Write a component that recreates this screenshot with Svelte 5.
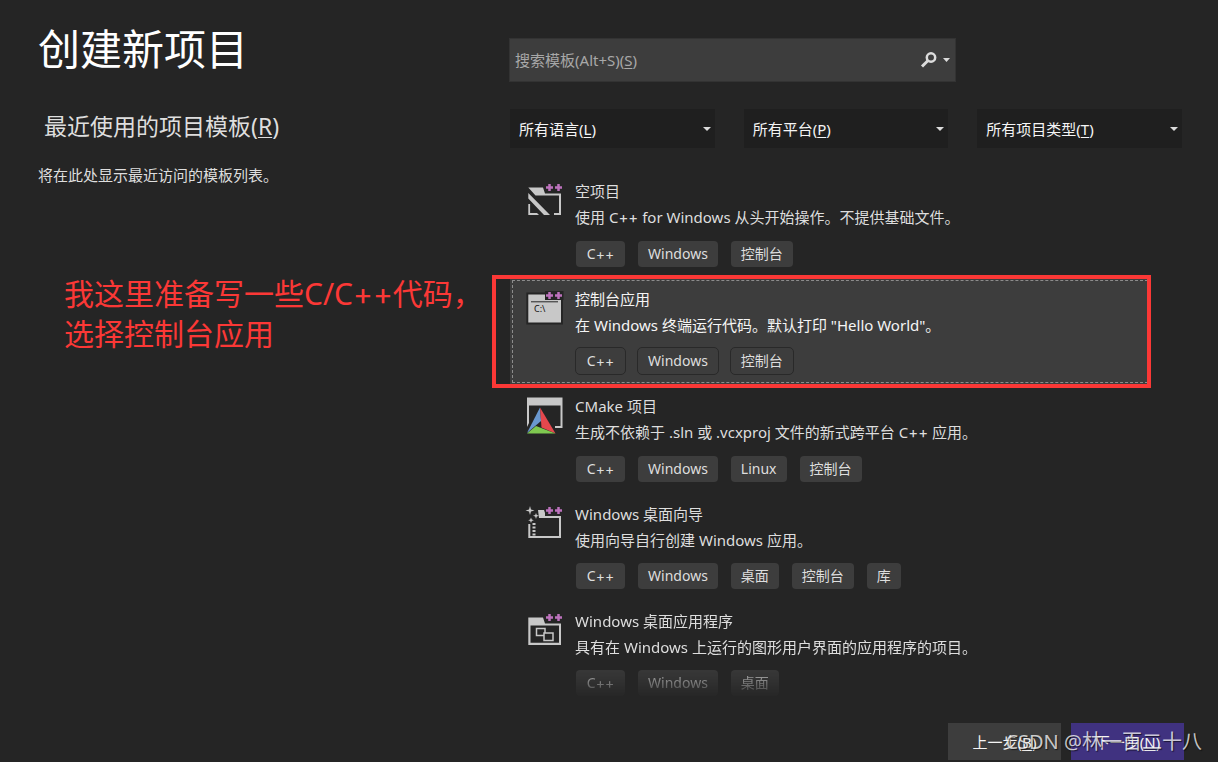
<script>
  const filters = [
    { id: "language", label: "所有语言", key: "L" },
    { id: "platform", label: "所有平台", key: "P" },
    { id: "type", label: "所有项目类型", key: "T" },
  ];

  const templates = [
    {
      icon: "empty",
      name: "空项目",
      description: "使用 C++ for Windows 从头开始操作。不提供基础文件。",
      tags: ["C++", "Windows", "控制台"],
    },
    {
      icon: "console",
      name: "控制台应用",
      description: '在 Windows 终端运行代码。默认打印 "Hello World"。',
      tags: ["C++", "Windows", "控制台"],
    },
    {
      icon: "cmake",
      name: "CMake 项目",
      description: "生成不依赖于 .sln 或 .vcxproj 文件的新式跨平台 C++ 应用。",
      tags: ["C++", "Windows", "Linux", "控制台"],
    },
    {
      icon: "wizard",
      name: "Windows 桌面向导",
      description: "使用向导自行创建 Windows 应用。",
      tags: ["C++", "Windows", "桌面", "控制台", "库"],
    },
    {
      icon: "desktop",
      name: "Windows 桌面应用程序",
      description: "具有在 Windows 上运行的图形用户界面的应用程序的项目。",
      tags: ["C++", "Windows", "桌面"],
    },
  ];

  let search = $state("");
  let selected = $state("console");
</script>

<!-- the plus signs use a wider face than the rest of the text -->
{#snippet rich(text)}
  {#each text.split(/(\+\+)/) as part}{#if part === "++"}<span class="plus">++</span>{:else}{part}{/if}{/each}
{/snippet}

{#snippet plusPlus()}
  <path class="badge" d="M22.5 2v7M19 5.5h7M31.5 2v7M28 5.5h7" />
{/snippet}

{#snippet icon(kind)}
  <svg class="icon" width="36" height="38" viewBox="0 0 36 38" aria-hidden="true">
    {#if kind === "empty"}
      <path class="fill" d="M1.3 5.5H16l2 6h16V33h-7v-2h5V13.5H8.5z" />
      <path class="fill" d="M1.3 11v5.5L17 33h6zM1.3 22h1.8v9H10l2 2H1.3z" />
      {@render plusPlus()}
    {:else if kind === "console"}
      <path class="halo" d="M1.3 4.5H34v28H1.3z" />
      <path class="fill" d="M1.3 4.5H34v28H1.3z" />
      <path class="halo" d="M20 3h14.500v5H20z" />
      <path d="M4 11.8h27" stroke="#252525" />
      <text x="7" y="22" font-size="9" fill="#111">C:\</text>
      {@render plusPlus()}
    {:else if kind === "cmake"}
      <path class="fill" d="M0 .5h35.5V31H28v-2h5.5V8.5H2V26l-2 4z" />
      <path d="M13 10.5L0 36l14-12z" fill="#6a98d0" />
      <path d="M13 10.5l15.5 26-14-6z" fill="#e5484d" />
      <path d="M0 36.5L9 29l19.5 7.5z" fill="#7fc850" />
    {:else if kind === "wizard"}
      <path class="fill" d="M11 5h6l1 3v3h16v22H1.3V19h2v12H32V13H12z" />
      <path class="fill" d="M3 1l1 3.5 3.500 1-3.500 1L3 10 2 6.500l-3.500-1 3.500-1zM9 8l.8 2 2.200.8-2.200.8L9 14l-.8-2.400L6 10.800l2.200-.8zM4 12.500l.8 2 2 .8-2 .8-.8 2-.8-2-2-.8 2-.8z" />
      <path class="fill" d="M5.5 18h3v2h-3zM5.5 21.5h3v2h-3zM5.5 25h3v2h-3zM5.5 28.5h3v2h-3z" />
      {@render plusPlus()}
    {:else}
      <path class="fill" fill-rule="evenodd" d="M1.3 5.5H16l2 6h16V33H1.3zM3.5 13.5v17.3H32V13.5z" />
      <path class="line" d="M9.5 16.5H18v7H9.5z" />
      <path class="line front" d="M17 21h9v7.5h-9z" />
      {@render plusPlus()}
    {/if}
  </svg>
{/snippet}

<div class="dialog">
  <main>
    <section class="recent">
      <h1>创建新项目</h1>
      <h2>最近使用的项目模板(<u>R</u>)</h2>
      <p>将在此处显示最近访问的模板列表。</p>
      <div class="note">
        我这里准备写一些C/C<span class="plus">++</span>代码，<br />选择控制台应用
      </div>
    </section>

    <section class="browse">
      <div class="search">
        {#if !search}
          <label for="search">搜索模板(Alt+S)(<u>S</u>)</label>
        {/if}
        <input id="search" type="text" bind:value={search} />
        <button class="search-button" aria-label="搜索">
          <svg width="32" height="18" viewBox="0 0 32 18">
            <circle cx="12" cy="6.5" r="4.2" fill="none" stroke="#dcdcdc" stroke-width="2.5" />
            <path d="M8.8 9.8L3 15.5" stroke="#dcdcdc" stroke-width="3" />
            <path d="M24 7h7l-3.5 4z" fill="#dcdcdc" />
          </svg>
        </button>
      </div>

      <div class="filters">
        {#each filters as filter}
          <div class="filter">
            <label for={filter.id}>{filter.label}(<u>{filter.key}</u>)</label>
            <select id={filter.id}>
              <option value="" label=" "></option>
            </select>
            <svg width="8" height="4" viewBox="0 0 8 4" aria-hidden="true">
              <path d="M0 0h8L4 4z" fill="#dcdcdc" />
            </svg>
          </div>
        {/each}
      </div>

      <ul class="templates">
        {#each templates as template}
          <li class:selected={selected === template.icon}>
            <button class="template" onclick={() => (selected = template.icon)}>
              {@render icon(template.icon)}
              <span class="details">
                <span class="name">{@render rich(template.name)}</span>
                <span class="description">{@render rich(template.description)}</span>
                <span class="tags">
                  {#each template.tags as tag}
                    <span class="tag">{@render rich(tag)}</span>
                  {/each}
                </span>
              </span>
            </button>
            {#if template.icon === "console"}
              <span class="marker"></span>
            {/if}
          </li>
        {/each}
      </ul>
    </section>
  </main>

  <footer>
    <button>上一步(<u>B</u>)</button>
    <button class="primary">下一步(<u>N</u>)</button>
    <span class="watermark">CSDN @林一百二十八</span>
  </footer>
</div>

<style>
  :global(body) {
    background: #252525;
  }

  .dialog {
    box-sizing: border-box;
    min-height: 100vh;
    padding: 20px 36px 0 38px;
    background: #252525;
    color: #dedede;
    font: 15px/20px "Noto Sans", "Noto Sans CJK SC", sans-serif;
  }

  main {
    display: grid;
    grid-template-columns: 7fr 10fr;
  }

  h1,
  h2,
  p {
    margin: 0;
    font-weight: 400;
  }

  h1 {
    color: #fff;
    font-size: 42px;
    line-height: 58px;
  }

  h2 {
    margin: 32px 0 0 6px;
    font-size: 23px;
    line-height: 32px;
  }

  p {
    margin-top: 23px;
  }

  u {
    text-decoration-thickness: 1px;
    text-underline-offset: 2px;
  }

  button,
  input,
  select {
    border: none;
    border-radius: 0;
    color: inherit;
    font: inherit;
  }

  .plus {
    font-family: Inter, "Noto Sans", sans-serif;
  }

  .note {
    margin: 89px 0 0 26px;
    color: #fb3836;
    font-size: 30px;
    line-height: 40px;
    white-space: nowrap;
  }

  .browse {
    min-width: 0;
    padding-top: 18px;
  }

  .search,
  .filter {
    display: grid;
    align-items: center;
  }

  .search > *,
  .filter > * {
    grid-area: 1 / 1;
  }

  .search label,
  .filter label {
    z-index: 1;
    pointer-events: none;
  }

  .search {
    box-sizing: border-box;
    width: 447px;
    max-width: 100%;
    height: 44px;
    border: 1px solid #333;
    background: #3d3d3d;
  }

  .search label {
    padding-left: 5px;
    color: #a8a8a8;
  }

  .search input {
    height: 100%;
    padding: 0 48px 0 5px;
    background: none;
    outline: none;
  }

  .search-button {
    display: flex;
    justify-self: end;
    padding: 0 4px 0 0;
    background: none;
  }

  .filters {
    display: grid;
    grid-template-columns: repeat(3, 1fr);
    gap: 29px;
    margin: 27px 0 0 1px;
  }

  .filter {
    height: 39px;
    background: #1f1f1f;
    color: #f5f5f5;
  }

  .filter label {
    padding-left: 9px;
  }

  .filter select {
    width: 100%;
    height: 100%;
    appearance: none;
    background: none;
  }

  .filter svg {
    justify-self: end;
    margin-right: 4px;
    pointer-events: none;
  }

  .templates {
    margin: 22px 32px 0 1px;
    padding: 0;
    list-style: none;
  }

  .templates li {
    position: relative;
  }

  .templates li:last-child {
    mask-image: linear-gradient(#000 calc(100% - 44px), transparent calc(100% - 8px));
  }

  .template {
    display: flex;
    gap: 12px;
    width: 100%;
    padding: 8px 0 10px 17px;
    background: none;
    text-align: left;
  }

  .selected .template {
    background: #3d3d3d;
    color: #f5f5f5;
    outline: 1px dashed #8c8c8c;
    outline-offset: -3px;
  }

  .icon {
    flex: none;
    margin-top: 4px;
    overflow: visible;
  }

  .fill {
    fill: #c8c8c8;
  }

  .halo {
    fill: #252525;
    stroke: #252525;
    stroke-width: 4;
  }

  .line {
    fill: none;
    stroke: #c8c8c8;
    stroke-width: 1.5;
  }

  .front {
    fill: #252525;
  }

  .badge {
    fill: none;
    stroke: #bd72bd;
    stroke-width: 2.5;
  }

  .details {
    min-width: 0;
  }

  .name,
  .description {
    display: block;
    line-height: 26px;
  }

  .tags {
    display: flex;
    gap: 11px;
    margin-top: 9px;
  }

  .tag {
    box-sizing: border-box;
    padding: 0 10px;
    border: 1px solid transparent;
    border-radius: 5px;
    background: #3d3d3d padding-box;
    color: #dedede;
    font-size: 14px;
    line-height: 26px;
    text-align: center;
  }

  .tag:first-child {
    min-width: 51px;
  }

  .selected .tag {
    border-color: #292929;
  }

  .marker {
    position: absolute;
    inset: -3px -1px -3px -18px;
    border: 4px solid #fb3836;
    pointer-events: none;
  }

  footer {
    position: relative;
    display: flex;
    justify-content: flex-end;
    gap: 10px;
    margin: 16px -2px 0 0;
  }

  footer button {
    min-width: 113px;
    height: 37px;
    padding: 0;
    background: #3d3d3d;
    color: #f5f5f5;
  }

  footer .primary {
    background: #403280;
  }

  .watermark {
    position: absolute;
    right: -18px;
    bottom: 4px;
    color: rgba(255, 255, 255, 0.75);
    font-size: 20px;
    line-height: 28px;
    text-shadow: 1px 1px 1px rgba(0, 0, 0, 0.6);
    white-space: nowrap;
    pointer-events: none;
  }
</style>
